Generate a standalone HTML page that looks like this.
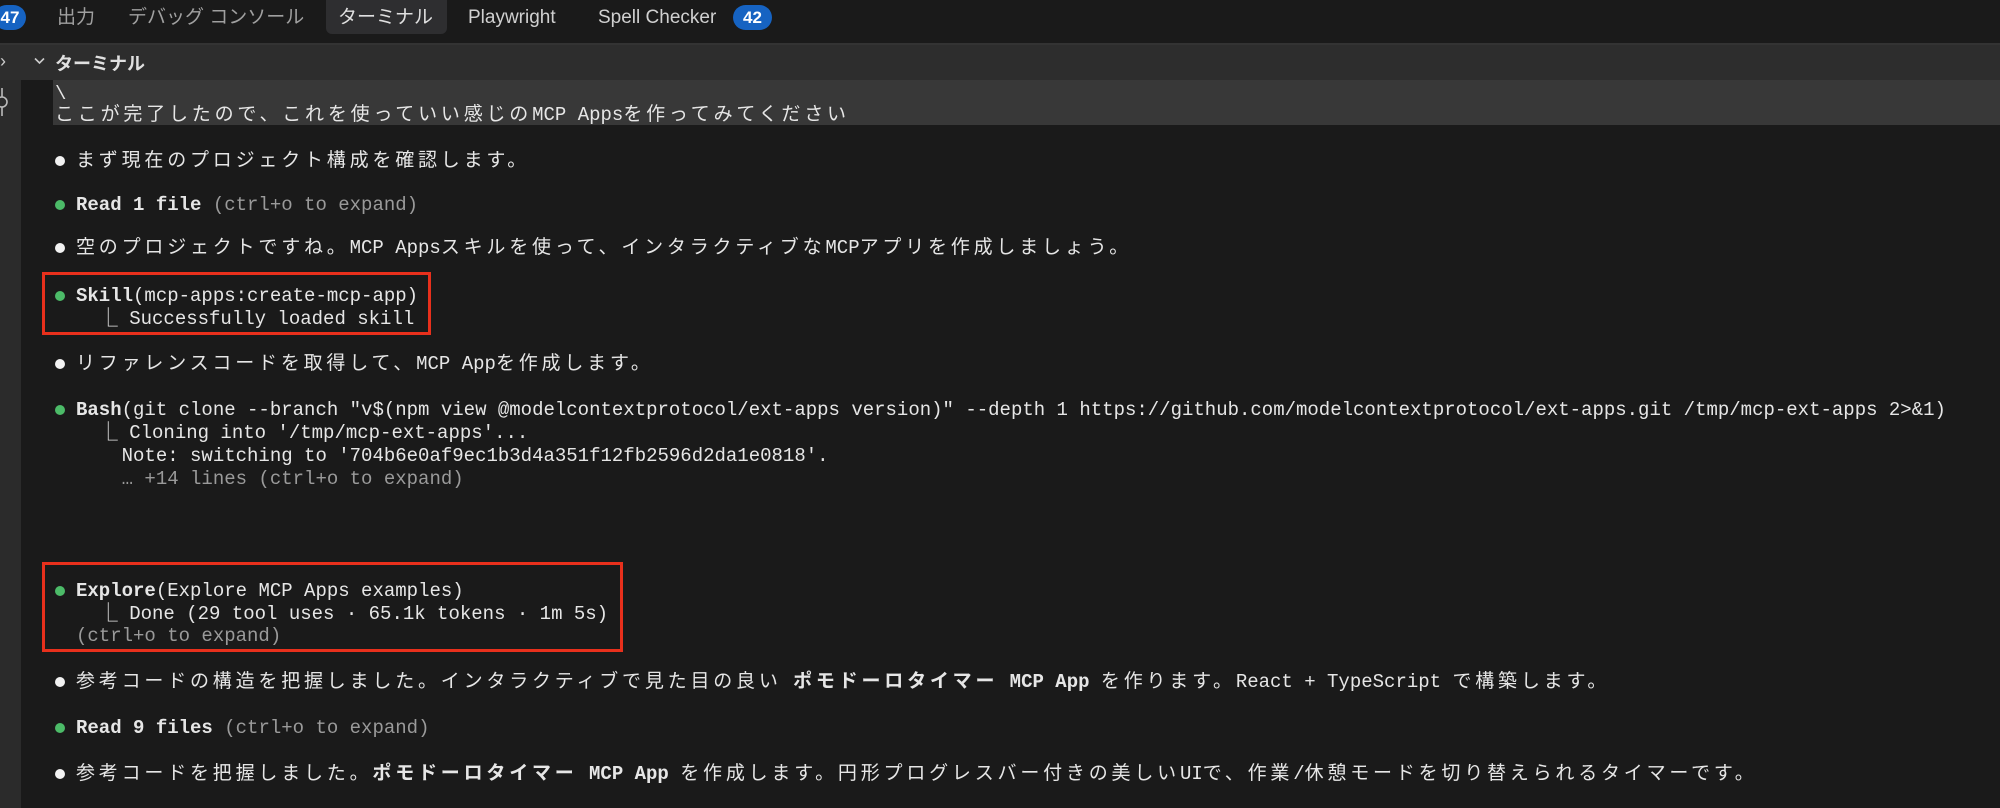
<!DOCTYPE html>
<html><head><meta charset="utf-8"><style>
*{margin:0;padding:0;box-sizing:border-box}
body{width:2000px;height:808px;background:#1a1a1a;overflow:hidden;position:relative;font-family:"Liberation Mono","Noto Sans CJK JP",monospace;color:#e6e6e6}
.tabs{position:absolute;left:0;top:0;width:2000px;height:43px;background:#1a1a1a;font-family:"Liberation Sans","Noto Sans CJK JP",sans-serif;font-size:19px}
.t{position:absolute;top:5px;line-height:26px;color:#a0a0a0}
.badge{position:absolute;top:5px;height:25px;border-radius:13px;background:#1663c2;color:#fff;font-size:17px;line-height:25px;text-align:center;font-weight:bold}
.active{position:absolute;left:326px;top:0;width:121px;height:34px;background:#2e2e30;border-radius:0 0 6px 6px}
.hdr{position:absolute;left:0;top:43px;width:2000px;height:37px;background:#2d2d2d;border-top:2px solid #333}
.gut{position:absolute;left:0;top:80px;width:21px;height:728px;background:#2b2b2b}
.hl{position:absolute;left:53px;top:80px;width:1947px;height:45px;background:#383838}
.l{position:absolute;font-size:19px;line-height:23px;white-space:pre;height:23px;margin-top:2px}
.j{letter-spacing:3.8px}
.b{font-weight:bold}
.g{color:#9a9a9a}
.dot{position:absolute;width:10px;height:10px;border-radius:50%;margin-top:2px}
.w{background:#f2f2f2}.gr{background:#4cbb68}
.box{position:absolute;border:3px solid #e8301c}
</style></head><body>
<div class="tabs">
<div class="badge" style="left:-6px;width:32px">47</div>
<div class="t" style="left:57px">出力</div>
<div class="t" style="left:128px">デバッグ コンソール</div>
<div class="active"></div>
<div class="t" style="left:338px;color:#e0e0e0">ターミナル</div>
<div class="t" style="left:468px;color:#d0d0d0">Playwright</div>
<div class="t" style="left:598px;color:#d0d0d0">Spell Checker</div>
<div class="badge" style="left:733px;width:39px">42</div>
</div>
<div class="hdr">
<div style="position:absolute;left:0;top:6px;font-family:'Liberation Sans',sans-serif;font-size:18px;color:#ccc">›</div>
<svg style="position:absolute;left:34px;top:12px" width="11" height="8" viewBox="0 0 11 8"><path d="M1 1.5 L5.5 6 L10 1.5" stroke="#ccc" stroke-width="1.6" fill="none"/></svg>
<div style="position:absolute;left:55px;top:5px;font-family:'Liberation Sans','Noto Sans CJK JP',sans-serif;font-weight:bold;font-size:18px;color:#e0e0e0">ターミナル</div>
</div>
<div class="gut"><svg style="position:absolute;left:-4px;top:6px" width="16" height="32" viewBox="0 0 16 32"><circle cx="6" cy="16" r="5" stroke="#bbb" stroke-width="1.6" fill="none"/><path d="M6 2V11M6 21V30" stroke="#bbb" stroke-width="1.6"/></svg></div>
<div class="hl"></div>
<div class="l" style="left:55px;top:81px">\</div>
<div class="l" style="left:55px;top:102px"><span class="j">ここが完了したので、これを使っていい感じの</span>MCP Apps<span class="j">を作ってみてください</span></div>

<div class="dot w" style="left:55px;top:154px"></div>
<div class="l" style="left:76px;top:148px"><span class="j">まず現在のプロジェクト構成を確認します。</span></div>

<div class="dot gr" style="left:55px;top:198px"></div>
<div class="l" style="left:76px;top:192px"><span class="b">Read 1 file</span> <span class="g">(ctrl+o to expand)</span></div>

<div class="dot w" style="left:55px;top:241px"></div>
<div class="l" style="left:76px;top:235px"><span class="j">空のプロジェクトですね。</span>MCP Apps<span class="j">スキルを使って、インタラクティブな</span>MCP<span class="j">アプリを作成しましょう。</span></div>

<div class="box" style="left:42px;top:272px;width:389px;height:63px"></div>
<div class="dot gr" style="left:55px;top:289px"></div>
<div class="l" style="left:76px;top:283px"><span class="b">Skill</span>(mcp-apps:create-mcp-app)</div>
<div class="l" style="left:76px;top:306px">  ⎿ Successfully loaded skill</div>

<div class="dot w" style="left:55px;top:357px"></div>
<div class="l" style="left:76px;top:351px"><span class="j">リファレンスコードを取得して、</span>MCP App<span class="j">を作成します。</span></div>

<div class="dot gr" style="left:55px;top:403px"></div>
<div class="l" style="left:76px;top:397px"><span class="b">Bash</span>(git clone --branch "v$(npm view @modelcontextprotocol/ext-apps version)" --depth 1 https://github.com/modelcontextprotocol/ext-apps.git /tmp/mcp-ext-apps 2&gt;&amp;1)</div>
<div class="l" style="left:76px;top:420px">  ⎿ Cloning into '/tmp/mcp-ext-apps'...</div>
<div class="l" style="left:76px;top:443px">    Note: switching to '704b6e0af9ec1b3d4a351f12fb2596d2da1e0818'.</div>
<div class="l g" style="left:76px;top:466px">    … +14 lines (ctrl+o to expand)</div>

<div class="box" style="left:42px;top:562px;width:581px;height:90px"></div>
<div class="dot gr" style="left:55px;top:584px"></div>
<div class="l" style="left:76px;top:578px"><span class="b">Explore</span>(Explore MCP Apps examples)</div>
<div class="l" style="left:76px;top:601px">  ⎿ Done (29 tool uses · 65.1k tokens · 1m 5s)</div>
<div class="l g" style="left:76px;top:623px">(ctrl+o to expand)</div>

<div class="dot w" style="left:55px;top:675px"></div>
<div class="l" style="left:76px;top:669px"><span class="j">参考コードの構造を把握しました。インタラクティブで見た目の良い</span> <span class="b"><span class="j">ポモドーロタイマー</span> MCP App</span> <span class="j">を作ります。</span>React + TypeScript <span class="j">で構築します。</span></div>

<div class="dot gr" style="left:55px;top:721px"></div>
<div class="l" style="left:76px;top:715px"><span class="b">Read 9 files</span> <span class="g">(ctrl+o to expand)</span></div>

<div class="dot w" style="left:55px;top:767px"></div>
<div class="l" style="left:76px;top:761px"><span class="j">参考コードを把握しました。</span><span class="b"><span class="j">ポモドーロタイマー</span> MCP App</span> <span class="j">を作成します。円形プログレスバー付きの美しい</span>UI<span class="j">で、作業</span>/<span class="j">休憩モードを切り替えられるタイマーです。</span></div>
</body></html>
